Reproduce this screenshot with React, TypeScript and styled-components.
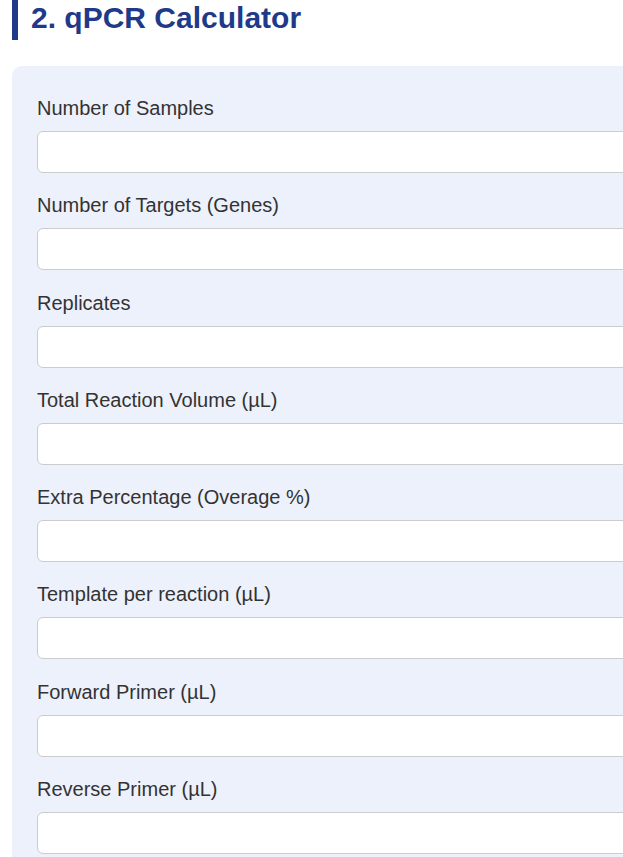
import styled, { createGlobalStyle } from "styled-components";

const GlobalStyle = createGlobalStyle`
  body {
    margin: 0;
    background: #ffffff;
    font-family: "Liberation Sans", Arial, sans-serif;
    color: #333333;
    overflow: hidden;
  }
`;

const Page = styled.div`
  width: 760px;
  padding-left: 12px;
`;

const Title = styled.h2`
  margin: -5px 0 26px;
  padding-left: 13px;
  border-left: 6px solid #1f3a89;
  color: #1f3a89;
  font-size: 30px;
  font-weight: 700;
  line-height: 45px;
  height: 45px;
`;

const Panel = styled.div`
  background: #edf1fc;
  border-radius: 10px;
  padding: 25px;
`;

const Field = styled.div`
  display: flex;
  flex-direction: column;
  margin-bottom: 15.25px;
`;

const Label = styled.label`
  font-size: 20px;
  line-height: 30px;
  padding-top: 2px;
  margin-bottom: 8px;
  color: #333333;
`;

const Input = styled.input`
  box-sizing: border-box;
  height: 42px;
  width: 100%;
  border: 1px solid #cccccc;
  border-radius: 6px;
  background: #ffffff;
  font-size: 16px;
  padding: 0 10px;
  font-family: inherit;
`;

const fields = [
  "Number of Samples",
  "Number of Targets (Genes)",
  "Replicates",
  "Total Reaction Volume (µL)",
  "Extra Percentage (Overage %)",
  "Template per reaction (µL)",
  "Forward Primer (µL)",
  "Reverse Primer (µL)",
];

export default function App() {
  return (
    <Page>
      <GlobalStyle />
      <Title>2. qPCR Calculator</Title>
      <Panel>
        {fields.map((label, i) => (
          <Field key={label}>
            <Label htmlFor={`f${i}`}>{label}</Label>
            <Input id={`f${i}`} type="number" />
          </Field>
        ))}
      </Panel>
    </Page>
  );
}
